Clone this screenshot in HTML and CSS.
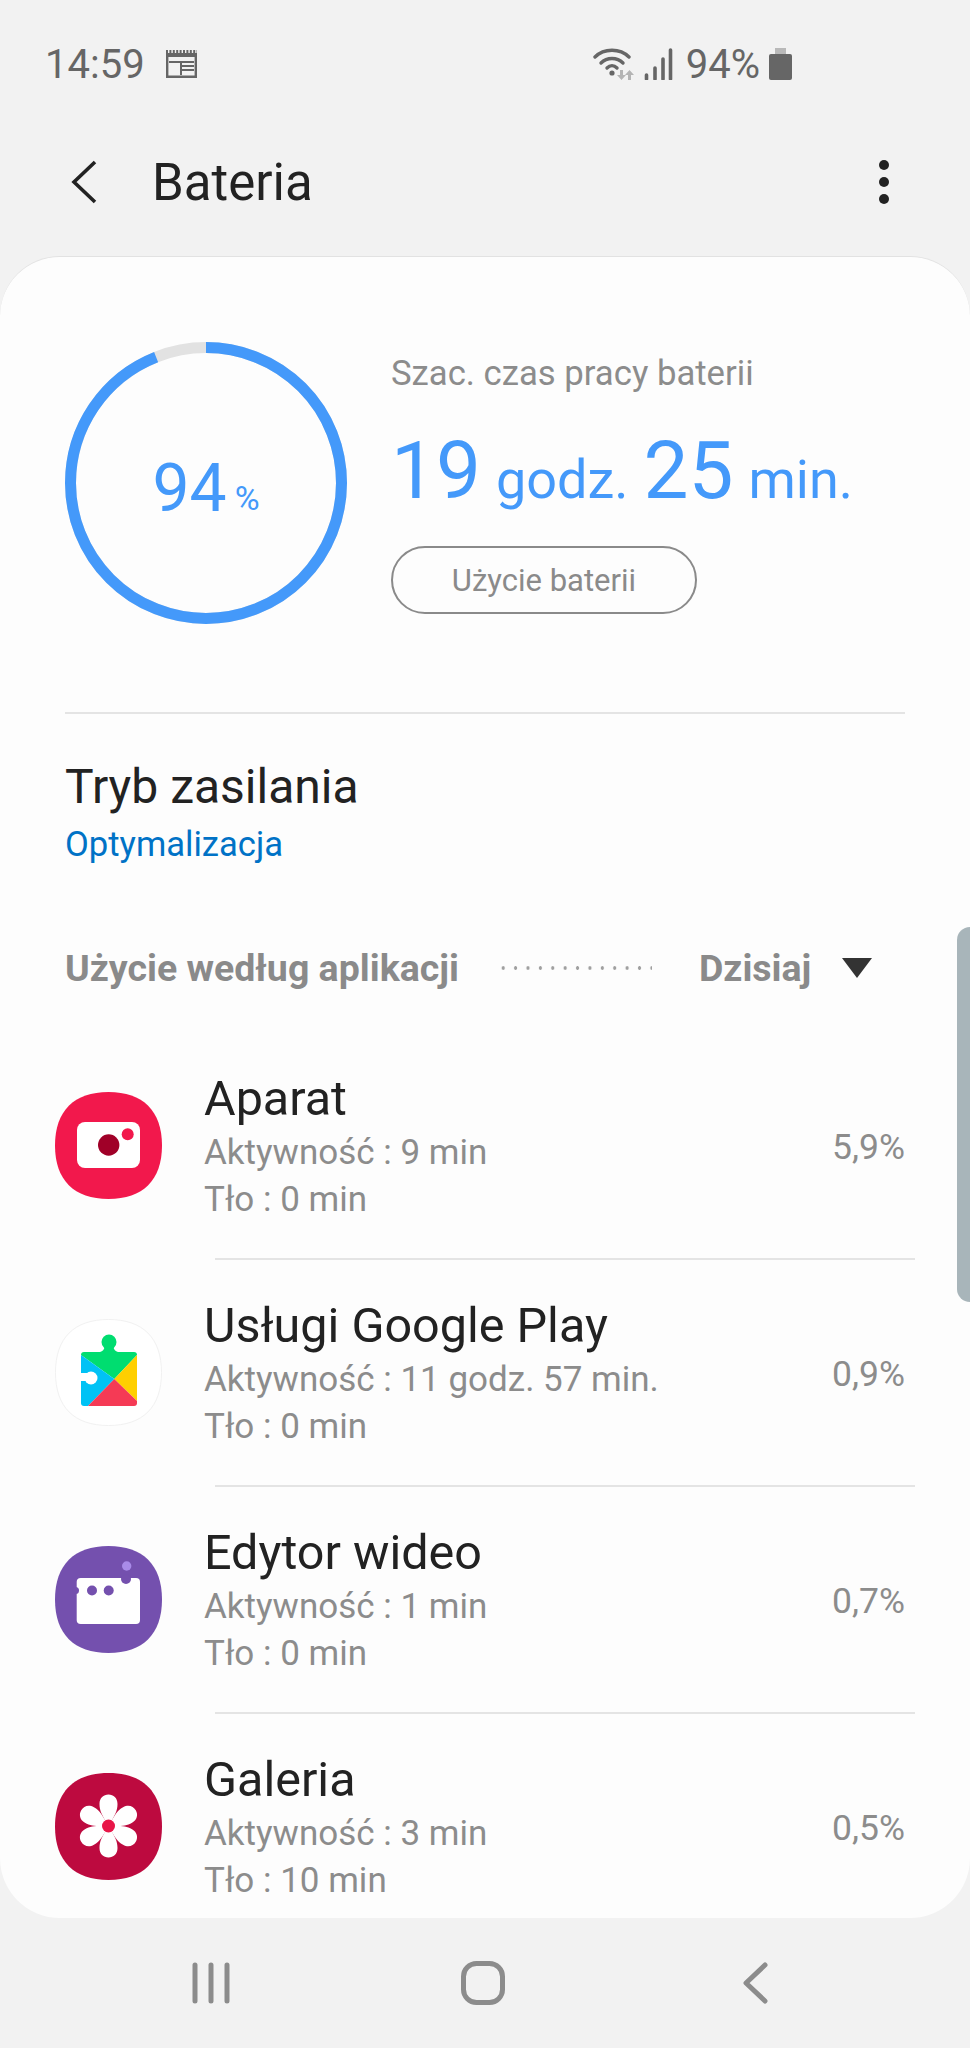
FILE: index.html
```html
<!DOCTYPE html>
<html lang="pl">
<head>
  <meta charset="UTF-8">
  <meta name="viewport" content="width=device-width, initial-scale=1.0">
  <title>Bateria</title>
  <link rel="stylesheet" href="styles.css">
</head>
<body>
  <div class="status-bar">
    <span class="clock">14:59</span>
    <svg class="status-news" width="31" height="28" viewBox="0 0 31 28">
      <path d="M0 1.500h31" fill="none" stroke="#666" stroke-width="3" stroke-dasharray="2 1.400"/>
      <path d="M1.200 3v23.800h28.600V3" fill="none" stroke="#666" stroke-width="2.400"/>
      <path d="M1 3h29v4H1zM3 11h25v2H3zM14 11h2v14h-2z" fill="#666"/>
      <path d="M16 15h12v2H16zM16 19h12v2H16z" fill="#666"/>
    </svg>
    <div class="status-right">
      <svg width="44" height="32" viewBox="0 0 44 32">
        <path d="M2 9C11 0 27 0 36 9" fill="none" stroke="#666" stroke-width="3.400" stroke-linecap="round"/>
        <path d="M8 15C14 9 24 9 30 15" fill="none" stroke="#666" stroke-width="3.400" stroke-linecap="round"/>
        <path d="M14 20C17 17 21 17 24 20" fill="none" stroke="#666" stroke-width="3.400" stroke-linecap="round"/>
        <circle cx="19" cy="25" r="2.600" fill="#666"/>
        <path d="M27 22h3v5h3l-4.500 5-4.500-5h3zM35 32v-5h-3l4.500-5 4.500 5h-3v5z" fill="#b4b4b4"/>
      </svg>
      <svg class="status-signal" width="29" height="32" viewBox="0 0 29 32">
        <path d="M2.500 31v-4M11 31V20M19 31V11M26.500 31V2" fill="none" stroke="#666" stroke-width="3.600" stroke-linecap="round"/>
      </svg>
      <span class="status-level">94%</span>
      <svg class="status-battery" width="23" height="32" viewBox="0 0 23 32">
        <path d="M6 0h11v6H6z" fill="#b9b9b9"/>
        <rect y="6" width="23" height="26" rx="2" fill="#666"/>
      </svg>
    </div>
  </div>

  <div class="app-bar">
    <svg width="28" height="44" viewBox="0 0 28 44">
      <path d="M25 2 4 22l21 20" fill="none" stroke="#222" stroke-width="3.600"/>
    </svg>
    <h1 class="app-title">Bateria</h1>
    <div class="more">
      <span class="more-dot"></span>
      <span class="more-dot"></span>
      <span class="more-dot"></span>
    </div>
  </div>

  <div class="card">
    <div class="summary">
      <div class="gauge">
        <svg width="282" height="282" viewBox="0 0 282 282">
          <circle cx="141" cy="141" r="135.500" fill="none" stroke="#e2e2e2" stroke-width="11"/>
          <circle cx="141" cy="141" r="135.500" fill="none" stroke="#4499fa" stroke-width="11" pathLength="100" stroke-dasharray="94 6" transform="rotate(-90 141 141)"/>
        </svg>
        <div class="gauge-text"><span class="gauge-num">94</span><span class="gauge-unit">%</span></div>
      </div>
      <div class="summary-info">
        <div class="summary-label">Szac. czas pracy baterii</div>
        <div class="summary-time">
          <span class="time-num">19</span><span class="time-unit">godz.</span><span class="time-num">25</span><span class="time-unit">min.</span>
        </div>
        <div class="usage-btn">Użycie baterii</div>
      </div>
    </div>

    <div class="divider"></div>

    <div class="power-mode">
      <div class="power-title">Tryb zasilania</div>
      <div class="power-value">Optymalizacja</div>
    </div>

    <div class="usage-head">
      <span class="usage-title">Użycie według aplikacji</span>
      <span class="usage-dots"></span>
      <span class="usage-range">Dzisiaj</span>
      <span class="usage-arrow"></span>
    </div>

    <div class="app-row">
      <svg class="app-icon" width="107" height="107" viewBox="0 0 107 107">
        <path d="M53.500 0C88 0 107 19 107 53.500S88 107 53.500 107 0 88 0 53.500 19 0 53.500 0Z" fill="#f2184c"/>
        <rect x="22" y="30" width="63" height="46" rx="8" fill="#fff"/>
        <circle cx="53.700" cy="53" r="10.700" fill="#a00028"/>
        <circle cx="72.700" cy="42.300" r="6" fill="#f2184c"/>
      </svg>
      <div class="app-text">
        <div class="app-name">Aparat</div>
        <div class="app-sub">Aktywność : 9 min</div>
        <div class="app-sub">Tło : 0 min</div>
      </div>
      <div class="app-pct">5,9%</div>
    </div>
    <div class="row-line"></div>

    <div class="app-row">
      <svg class="app-icon" width="107" height="107" viewBox="0 0 107 107">
        <path d="M53.500 .5C88 .5 106.500 19 106.500 53.500S88 106.500 53.500 106.500 .5 88 .5 53.500 19 .5 53.500 .5Z" fill="#fff" stroke="#f1f1f1"/>
        <circle cx="54" cy="23" r="7.500" fill="#00dd70"/>
        <path d="M49.500 28h9Q59 32 63 33H45Q49 32 49.500 28Z" fill="#00dd70"/>
        <path d="M29 33H79Q82 33 82 36L59.300 60 26 36Q26 33 29 33Z" fill="#00dd70"/>
        <path d="M26 36 59.300 60 33 87H29Q26 87 26 84Z" fill="#00c2f5"/>
        <path d="M82 36V82L59.300 60Z" fill="#ffcf00"/>
        <path d="M59.300 60 82 82V84Q82 87 79 87H33Z" fill="#f53a55"/>
        <circle cx="36" cy="59" r="6.500" fill="#fff"/>
        <path d="M25 54h10v8H25z" fill="#fff"/>
      </svg>
      <div class="app-text">
        <div class="app-name">Usługi Google Play</div>
        <div class="app-sub">Aktywność : 11 godz. 57 min.</div>
        <div class="app-sub">Tło : 0 min</div>
      </div>
      <div class="app-pct">0,9%</div>
    </div>
    <div class="row-line"></div>

    <div class="app-row">
      <svg class="app-icon" width="107" height="107" viewBox="0 0 107 107">
        <path d="M53.500 0C88 0 107 19 107 53.500S88 107 53.500 107 0 88 0 53.500 19 0 53.500 0Z" fill="#7450ae"/>
        <rect x="21.700" y="32" width="63.300" height="46" rx="4" fill="#fff"/>
        <circle cx="37" cy="44.500" r="5" fill="#7450ae"/>
        <circle cx="53.700" cy="44.500" r="5" fill="#7450ae"/>
        <circle cx="20.500" cy="44.500" r="3.500" fill="#7450ae"/>
        <circle cx="71" cy="33" r="5" fill="#7450ae"/>
        <circle cx="71.700" cy="20" r="4.700" fill="#a98be8"/>
      </svg>
      <div class="app-text">
        <div class="app-name">Edytor wideo</div>
        <div class="app-sub">Aktywność : 1 min</div>
        <div class="app-sub">Tło : 0 min</div>
      </div>
      <div class="app-pct">0,7%</div>
    </div>
    <div class="row-line"></div>

    <div class="app-row">
      <svg class="app-icon" width="107" height="107" viewBox="0 0 107 107">
        <path d="M53.500 0C88 0 107 19 107 53.500S88 107 53.500 107 0 88 0 53.500 19 0 53.500 0Z" fill="#bd0a3f"/>
        <g fill="#fff">
          <path d="M53.500 53C47 42 44.500 38 44.500 31 44.500 25 48.500 21.500 53.500 21.500S62.500 25 62.500 31C62.500 38 60 42 53.500 53Z"/>
          <path d="M53.500 53C47 42 44.500 38 44.500 31 44.500 25 48.500 21.500 53.500 21.500S62.500 25 62.500 31C62.500 38 60 42 53.500 53Z" transform="rotate(60 53.500 53)"/>
          <path d="M53.500 53C47 42 44.500 38 44.500 31 44.500 25 48.500 21.500 53.500 21.500S62.500 25 62.500 31C62.500 38 60 42 53.500 53Z" transform="rotate(120 53.500 53)"/>
          <path d="M53.500 53C47 42 44.500 38 44.500 31 44.500 25 48.500 21.500 53.500 21.500S62.500 25 62.500 31C62.500 38 60 42 53.500 53Z" transform="rotate(180 53.500 53)"/>
          <path d="M53.500 53C47 42 44.500 38 44.500 31 44.500 25 48.500 21.500 53.500 21.500S62.500 25 62.500 31C62.500 38 60 42 53.500 53Z" transform="rotate(240 53.500 53)"/>
          <path d="M53.500 53C47 42 44.500 38 44.500 31 44.500 25 48.500 21.500 53.500 21.500S62.500 25 62.500 31C62.500 38 60 42 53.500 53Z" transform="rotate(300 53.500 53)"/>
        </g>
        <circle cx="53.500" cy="53" r="6.500" fill="#e81648"/>
      </svg>
      <div class="app-text">
        <div class="app-name">Galeria</div>
        <div class="app-sub">Aktywność : 3 min</div>
        <div class="app-sub">Tło : 10 min</div>
      </div>
      <div class="app-pct">0,5%</div>
    </div>
  </div>

  <div class="scroll-thumb"></div>

  <div class="nav-bar">
    <svg width="42" height="44" viewBox="0 0 42 44">
      <path d="M5 4v36M21 4v36M37 4v36" fill="none" stroke="#8c8c8c" stroke-width="5" stroke-linecap="round"/>
    </svg>
    <svg width="44" height="44" viewBox="0 0 44 44">
      <rect x="2.500" y="2.500" width="39" height="39" rx="13" fill="none" stroke="#8c8c8c" stroke-width="5"/>
    </svg>
    <svg width="26" height="44" viewBox="0 0 26 44">
      <path d="M23 4 4 22l19 18" fill="none" stroke="#8c8c8c" stroke-width="5" stroke-linecap="round" stroke-linejoin="round"/>
    </svg>
  </div>
</body>
</html>
```

FILE: styles.css
```css
* {
  box-sizing: border-box;
}
body {
  margin: 0;
  width: 970px;
  height: 2048px;
  overflow: hidden;
  position: relative;
  background-color: #f2f2f2;
  font-family: Roboto, sans-serif;
  color: #222;
}
.status-bar {
  height: 128px;
  display: flex;
  align-items: center;
  padding: 0 178px 0 45px;
  color: #666;
  font-size: 40px;
}
.status-news {
  margin-left: 21px;
}
.status-right {
  margin-left: auto;
  display: flex;
  align-items: center;
}
.status-signal {
  margin-left: 7px;
}
.status-level {
  margin-left: 13px;
}
.status-battery {
  margin-left: 9px;
}
.app-bar {
  height: 108px;
  margin-bottom: 20px;
  display: flex;
  align-items: center;
  padding-left: 70px;
}
.app-title {
  margin: 0 0 0 54px;
  font-size: 51px;
  font-weight: 400;
}
.more {
  margin-left: auto;
  margin-right: 81px;
  display: flex;
  flex-direction: column;
  gap: 7px;
}
.more-dot {
  width: 10px;
  height: 10px;
  border-radius: 50%;
  background-color: #222;
}
.card {
  height: 1662px;
  overflow: hidden;
  background-color: #fdfdfd;
  border-radius: 60px;
  border-top: 1px solid #e2e2e2;
}
.summary {
  display: flex;
  padding: 85px 0 0 65px;
  height: 455px;
}
.gauge {
  width: 282px;
  height: 282px;
  position: relative;
}
.gauge-text {
  position: absolute;
  top: 5px;
  left: 0;
  width: 100%;
  height: 100%;
  display: flex;
  align-items: center;
  justify-content: center;
  color: #4499fa;
}
.gauge-num {
  font-size: 66px;
}
.gauge-unit {
  font-size: 34px;
  margin: 20px 0 0 8px;
}
.summary-info {
  margin-left: 44px;
}
.summary-label {
  font-size: 34.700px;
  line-height: 46px;
  margin-top: 8px;
  color: #8c8c8c;
}
.summary-time {
  color: #4499fa;
  height: 100px;
  line-height: 100px;
  margin-top: 25px;
}
.time-num {
  font-size: 80px;
}
.time-unit {
  font-size: 54px;
  margin: 0 15px;
}
.usage-btn {
  margin-top: 25px;
  width: 306px;
  height: 68px;
  border: 2.500px solid #8a8a8a;
  border-radius: 34px;
  color: #8a8a8a;
  font-size: 31px;
  display: flex;
  align-items: center;
  justify-content: center;
}
.divider {
  margin-left: 65px;
  width: 840px;
  height: 2px;
  background-color: #e4e4e4;
}
.power-mode {
  padding: 44px 0 0 65px;
}
.power-title {
  font-size: 48px;
  line-height: 58px;
}
.power-value {
  font-size: 34.600px;
  line-height: 44px;
  margin-top: 6px;
  color: #0072c6;
}
.usage-head {
  display: flex;
  align-items: center;
  margin-top: 77px;
  padding-left: 65px;
  height: 50px;
  color: #8a8a8a;
  font-weight: 700;
  font-size: 37.500px;
}
.usage-dots {
  width: 155px;
  height: 4px;
  margin-left: 38px;
  background: radial-gradient(circle, #a0a0a0 1.500px, transparent 2px) left center / 12.400px 4px repeat-x;
}
.usage-range {
  margin-left: 47px;
}
.usage-arrow {
  margin-left: 31px;
  width: 0;
  height: 0;
  border-left: 15px solid transparent;
  border-right: 15px solid transparent;
  border-top: 20px solid #333;
}
.app-row {
  height: 225px;
  display: flex;
  align-items: center;
  padding: 0 65px 0 55px;
}
.usage-head + .app-row {
  margin-top: 40px;
}
.app-icon {
  flex: none;
}
.app-text {
  margin: 1px 0 0 42px;
}
.app-name {
  font-size: 48.500px;
  line-height: 60px;
}
.app-sub {
  font-size: 35px;
  line-height: 47px;
  color: #8c8c8c;
}
.app-pct {
  margin: 3px 0 0 auto;
  font-size: 35.500px;
  color: #8c8c8c;
}
.row-line {
  margin-left: 215px;
  width: 700px;
  height: 2px;
  background-color: #e4e4e4;
}
.scroll-thumb {
  position: absolute;
  top: 927px;
  right: 0;
  width: 13px;
  height: 375px;
  background-color: #a8b5ba;
  border-radius: 13px 0 0 13px;
}
.nav-bar {
  height: 130px;
  display: flex;
  align-items: center;
  padding-left: 190px;
}
.nav-bar svg:nth-child(2) {
  margin-left: 229px;
}
.nav-bar svg:nth-child(3) {
  margin-left: 237px;
}
```
